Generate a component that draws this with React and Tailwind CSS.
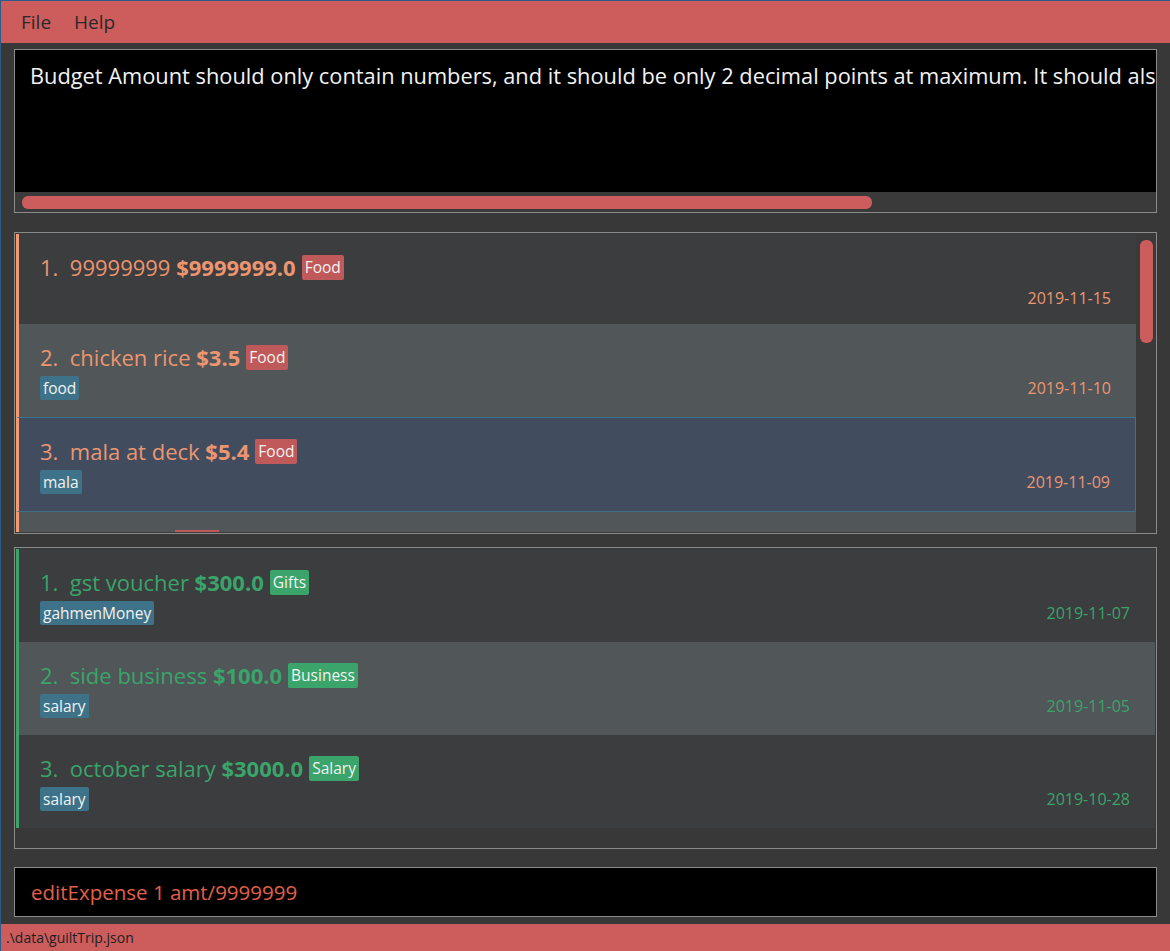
import React from 'react';

const FONT = { fontFamily: '"Open Sans", "Noto Sans", sans-serif' };

const expenses = [
  { n: 1, desc: '99999999', amt: '$9999999.0', cat: 'Food', tags: [], date: '2019-11-15', h: 'h-[90px]' },
  { n: 2, desc: 'chicken rice', amt: '$3.5', cat: 'Food', tags: ['food'], date: '2019-11-10', h: 'h-[93px]', alt: true },
  { n: 3, desc: 'mala at deck', amt: '$5.4', cat: 'Food', tags: ['mala'], date: '2019-11-09', h: 'h-[95px]', selected: true },
];

const incomes = [
  { n: 1, desc: 'gst voucher', amt: '$300.0', cat: 'Gifts', tags: ['gahmenMoney'], date: '2019-11-07' },
  { n: 2, desc: 'side business', amt: '$100.0', cat: 'Business', tags: ['salary'], date: '2019-11-05', alt: true },
  { n: 3, desc: 'october salary', amt: '$3000.0', cat: 'Salary', tags: ['salary'], date: '2019-10-28' },
];

function Row({ item, kind }) {
  const isExp = kind === 'expense';
  const text = isExp ? 'text-[#ec9570]' : 'text-[#3aa46a]';
  const bar = isExp ? 'border-l-[#f39a72]' : 'border-l-[#3aa46a]';
  const catBg = isExp ? 'bg-[#c05959]' : 'bg-[#3aa46a]';
  let bg = item.alt ? 'bg-[#515658]' : 'bg-[#3c3d3f]';
  if (item.selected) bg = 'bg-[#414d5f] border border-[#3e7189]';
  return (
    <div className={`${item.h || 'h-[93px]'} ${bg} border-l-[3px] ${bar} flex flex-col pl-[21px] pr-[25px] pt-[20px]`}>
      <div className={`flex items-center h-[26px] text-[22px] leading-[26px] ${text}`}>
        <span className="whitespace-pre">{item.n}.  {item.desc} </span>
        <span className="font-bold">{item.amt}</span>
        <span className={`ml-[6px] ${catBg} text-[#f2f2f2] text-[15.5px] leading-[21px] px-[3px] py-[2px] rounded-[2px]`}>{item.cat}</span>
      </div>
      <div className="flex items-center justify-between h-[26px] mt-[5px]">
        <div className="flex gap-[4px]">
          {item.tags.map((t) => (
            <span key={t} className="bg-[#3e7289] text-[#f2f2f2] text-[15.5px] leading-[20px] px-[3px] py-[2px] rounded-[2px]">{t}</span>
          ))}
        </div>
        <span className={`text-[16px] ${text}`}>{item.date}</span>
      </div>
    </div>
  );
}

export default function App() {
  return (
    <div style={FONT} className="w-[1170px] h-[951px] bg-[#383838] border-l border-t border-[#2b5c8c] flex flex-col overflow-hidden">
      {/* Menu bar */}
      <div className="h-[42px] bg-[#cd5c5c] flex items-center gap-[23px] pl-[20px] text-[19px] text-[#2a2a2a]">
        <span>File</span>
        <span>Help</span>
      </div>

      {/* Result display */}
      <div className="mt-[6px] mx-[13px] h-[164px] border border-[#8a8a8a] bg-black flex flex-col">
        <div className="flex-1 overflow-hidden pl-[15px] pt-[10px] text-[21.8px] text-[#f2f2f2]">
          <div className="w-[1400px] whitespace-nowrap">
            Budget Amount should only contain numbers, and it should be only 2 decimal points at maximum. It should also be positive.
          </div>
        </div>
        <div className="h-[20px] bg-[#3a3a3a] flex items-center pl-[7px]">
          <div className="w-[850px] h-[13px] rounded-[6px] bg-[#cd5c5c]" />
        </div>
      </div>

      {/* Expense list */}
      <div className="mt-[19px] mx-[13px] h-[302px] border border-[#8a8a8a] bg-[#3a3a3a] flex p-[1px] pr-0">
        <div className="flex-1 flex flex-col overflow-hidden">
          {expenses.map((e) => (
            <Row key={e.n} item={e} kind="expense" />
          ))}
          <div className="flex-1 bg-[#515658] border-l-[3px] border-l-[#f39a72] pl-[156px] flex items-end">
            <div className="w-[44px] h-[2px] bg-[#c05959]" />
          </div>
        </div>
        <div className="w-[20px] bg-[#3a3a3a] flex justify-center pt-[6px]">
          <div className="w-[13px] h-[103px] rounded-[6px] bg-[#cd5c5c]" />
        </div>
      </div>

      {/* Income list */}
      <div className="mt-[13px] mx-[13px] h-[302px] border border-[#8a8a8a] bg-[#383838] p-[1px]">
        {incomes.map((i) => (
          <Row key={i.n} item={i} kind="income" />
        ))}
      </div>

      {/* Command box */}
      <div className="mt-[18px] mx-[13px] h-[50px] border border-[#8a8a8a] bg-black flex items-center pl-[16px] text-[20.5px] text-[#e0604a]">
        editExpense 1 amt/9999999
      </div>

      {/* Status bar */}
      <div className="mt-auto h-[27px] bg-[#cd5c5c] flex items-center pl-[5px] text-[14px] text-[#1e1e1e]">
        .\data\guiltTrip.json
      </div>
    </div>
  );
}
